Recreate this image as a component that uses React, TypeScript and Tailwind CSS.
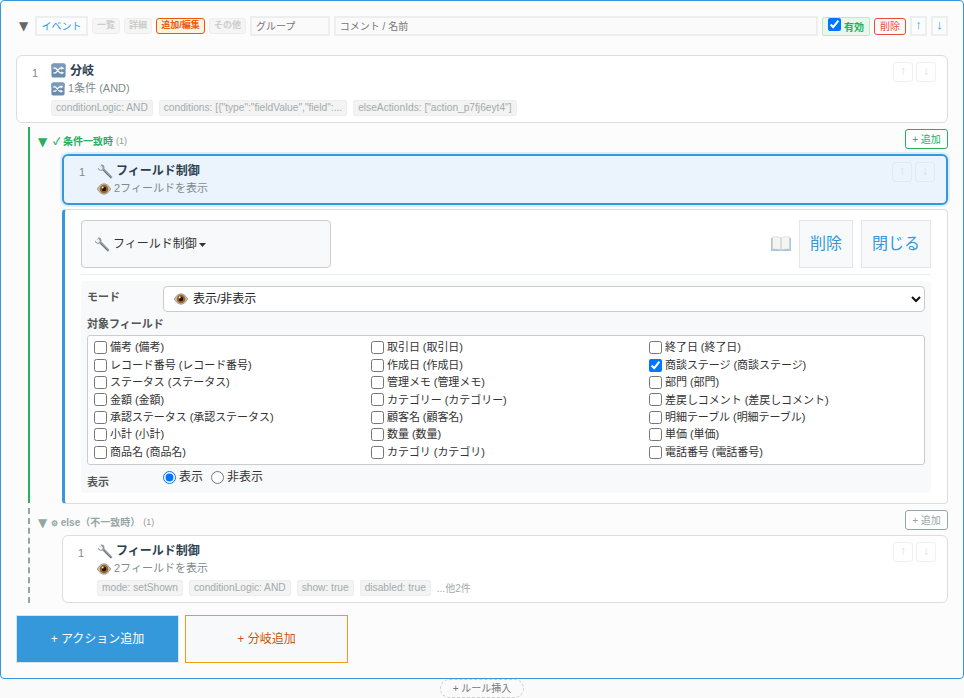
import React from "react";

const Shuffle = ({ s = 15 }: { s?: number }) => (
  <svg width={s} height={s} viewBox="0 0 16 16" className="shrink-0">
    <rect x="0.5" y="0.5" width="15" height="15" rx="2" fill="#6b8cae" />
    <rect x="0.5" y="0.5" width="15" height="7" rx="2" fill="#7c9aba" />
    <path d="M2.500 5.500h2.500l4.500 5h2M2.500 10.500h2.500l4.500-5h2" fill="none" stroke="#fff" strokeWidth="1.300" />
    <path d="M11 3.800l3 1.700-3 1.700zM11 8.800l3 1.700-3 1.700z" fill="#fff" />
  </svg>
);
const Wrench = ({ s = 16 }: { s?: number }) => (
  <svg width={s} height={s} viewBox="0 0 16 16" className="shrink-0">
    <path d="M1 4.500 3.200 6.700l2-.3.500-2L3.500 1.800C5.500.8 7.600 2.200 7.500 4.500c0 .5-.1.800-.2 1.100l7.800 7.800a1.300 1.300 0 0 1-1.800 1.800L5.500 7.400c-2.500 1-5-.6-4.500-2.900z" fill="#929ba3" />
    <path d="M6.500 7.500 13.800 14.800" stroke="#6a747c" strokeWidth="1" />
    <path d="M2.500 2.600 4.500 4.600" stroke="#c2c8cc" strokeWidth=".8" />
  </svg>
);
const Eye = ({ s = 14 }: { s?: number }) => (
  <svg width={s} height={s} viewBox="0 0 14 14" className="shrink-0">
    <path d="M0.300 7C2.300 3.300 4.800 1.800 7 1.800S11.700 3.300 13.700 7C11.700 10.700 9.200 12.200 7 12.200S2.300 10.700.3 7z" fill="#c9c4be" stroke="#85817d" strokeWidth=".7" />
    <circle cx="7" cy="7" r="4.300" fill="#9a6420" />
    <circle cx="7" cy="7" r="2.200" fill="#1d1206" />
    <circle cx="5.700" cy="5.500" r=".9" fill="#fff" />
  </svg>
);
const Book = () => (
  <svg width="20" height="16" viewBox="0 0 20 16" className="shrink-0">
    <path d="M0 2h10v13H0zM10 2h10v13H10z" fill="#a7c7d8" />
    <path d="M1.500 1c3-.6 6-.4 8.300.8V14c-2.300-1-5.300-1.200-8.300-.8zM18.500 1c-3-.6-6-.4-8.300.8V14c2.300-1 5.300-1.200 8.300-.8z" fill="#f4f4f0" stroke="#c8ccd0" strokeWidth=".5" />
  </svg>
);

const Tag = ({ children }: { children: React.ReactNode }) => (
  <span className="rounded-[2px] border border-[#eeeeee] bg-[#f3f3f3] px-[4px] h-[16px] leading-[14px] text-[10.2px] text-[#a3abad] whitespace-nowrap">
    {children}
  </span>
);

const Arrows = ({ box = "border-[#f0f0f0]" }: { box?: string }) => (
  <div className="absolute top-[6px] right-[11px] flex gap-[3px]">
    {["↑", "↓"].map((a) => (
      <span key={a} className={`w-[20px] h-[20px] rounded-[3px] border flex items-center justify-center pb-[3px] text-[12px] text-[#dcdcdc] ${box}`}>
        {a}
      </span>
    ))}
  </div>
);

const F1 = ["備考 (備考)", "レコード番号 (レコード番号)", "ステータス (ステータス)", "金額 (金額)", "承認ステータス (承認ステータス)", "小計 (小計)", "商品名 (商品名)"];
const F2 = ["取引日 (取引日)", "作成日 (作成日)", "管理メモ (管理メモ)", "カテゴリー (カテゴリー)", "顧客名 (顧客名)", "数量 (数量)", "カテゴリ (カテゴリ)"];
const F3 = ["終了日 (終了日)", "商談ステージ (商談ステージ)", "部門 (部門)", "差戻しコメント (差戻しコメント)", "明細テーブル (明細テーブル)", "単価 (単価)", "電話番号 (電話番号)"];

const Col = ({ items, w }: { items: string[]; w: string }) => (
  <div className={`flex flex-col ${w}`}>
    {items.map((t) => (
      <label key={t} className="flex items-center h-[17.4px] text-[11px] tracking-[-0.05px] text-[#333333] whitespace-nowrap">
        <input type="checkbox" readOnly checked={t.startsWith("商談")} className="w-[13px] h-[13px] mr-[3px] ml-0 shrink-0" />
        {t}
      </label>
    ))}
  </div>
);

const Tri = ({ c }: { c: string }) => (
  <span className={`font-['DejaVu_Sans'] text-[12px] leading-none ${c}`}>▼</span>
);

export default function App() {
  return (
    <div className="relative w-[964px] h-[698px] overflow-hidden bg-[#fafafa] font-['Liberation_Sans','Noto_Sans_CJK_JP',sans-serif]">
      <div className="w-[964px] h-[679px] border border-[#3498db] rounded-[4px] bg-[#fcfcfc] pl-[15px] pr-[15px] pt-[15px]">
        {/* header */}
        <div className="flex items-center h-[20px]">
          <span className="w-[19px] pl-[3px] flex"><Tri c="text-[#666666]" /></span>
          <span className="w-[53px] h-[20px] border-2 border-[#eeeeee] bg-[#fafcfe] text-[10px] text-[#3498db] flex items-center justify-center">イベント</span>
          <div className="flex items-center ml-[4px] gap-[4px]">
            <span className="w-[28px] h-[16px] rounded-[3px] border border-[#eeeeee] bg-[#f5f5f5] text-[9px] font-bold text-[#cccccc] flex items-center justify-center">一覧</span>
            <span className="w-[28px] h-[16px] rounded-[3px] border border-[#eeeeee] bg-[#f5f5f5] text-[9px] font-bold text-[#cccccc] flex items-center justify-center">詳細</span>
            <span className="w-[49px] h-[16px] rounded-[3px] border border-[#e8590c] bg-[#fff3e0] text-[9px] font-bold text-[#e8590c] flex items-center justify-center">追加/編集</span>
            <span className="w-[37px] h-[16px] rounded-[3px] border border-[#eeeeee] bg-[#f5f5f5] text-[9px] font-bold text-[#cccccc] flex items-center justify-center">その他</span>
          </div>
          <span className="ml-[4px] w-[80px] h-[20px] border-2 border-[#eeeeee] bg-[#fafafa] text-[10px] text-[#777777] pl-[4px] flex items-center">グループ</span>
          <span className="ml-[4px] w-[485px] h-[20px] border-2 border-[#eeeeee] bg-[#fafafa] text-[10px] text-[#777777] pl-[4px] flex items-center">コメント / 名前</span>
          <span className="relative ml-[4px] w-[48px] h-[19px] rounded-[2px] border border-[#c3e6cb] bg-[#e8f8ec] text-[10px] font-bold text-[#27ae60] flex items-center pl-[21px] pt-[2px]">
            <input type="checkbox" readOnly checked className="absolute left-[5px] top-0 w-[13px] h-[13px] m-0" />
            有効
          </span>
          <span className="ml-[4px] w-[32px] h-[17px] rounded-[3px] border border-[#e74c3c] bg-[#fffafa] text-[10px] text-[#e74c3c] flex items-center justify-center">削除</span>
          <span className="ml-[4px] w-[17px] h-[20px] border-2 border-[#eeeeee] bg-[#fafcfe] text-[13px] text-[#3498db] flex items-center justify-center pb-[2px]">↑</span>
          <span className="ml-[4px] w-[17px] h-[20px] border-2 border-[#eeeeee] bg-[#fafcfe] text-[13px] text-[#3498db] flex items-center justify-center pb-[2px]">↓</span>
        </div>

        {/* branch card */}
        <div className="relative mt-[19px] w-[932px] h-[68px] rounded-[6px] border border-[#dddddd] bg-white flex">
          <span className="w-[34px] pl-[15px] pt-[9px] text-[11px] text-[#888888]">1</span>
          <div className="pt-[6px] flex flex-col">
            <div className="flex items-center gap-[4px] h-[17px] text-[12px] font-bold text-[#2c3e50]"><Shuffle />分岐</div>
            <div className="flex items-center gap-[3px] h-[19px] text-[11px] text-[#7f8c8d]"><Shuffle s={14} />1条件 (AND)</div>
            <div className="flex gap-[6px] mt-[2px]">
              <Tag>conditionLogic: AND</Tag>
              <Tag>conditions: [{'{'}"type":"fieldValue","field":...</Tag>
              <Tag>elseActionIds: ["action_p7fj6eyt4"]</Tag>
            </div>
          </div>
          <Arrows />
        </div>

        {/* match branch */}
        <div className="relative mt-[4px] ml-[12px] w-[920px] h-[376px] pt-[2px] border-l-2 border-[#27ae60]">
          <div className="flex h-[22px] pl-[8px] text-[10px]">
            <span className="flex items-center h-[24px] pt-px">
              <span className="w-[15px] flex"><Tri c="text-[#27ae60]" /></span>
              <span className="font-bold text-[#27ae60]">✓ 条件一致時</span>
              <span className="ml-[3px] text-[9px] font-normal text-[#999999]">(1)</span>
            </span>
            <span className="ml-auto w-[43px] h-[20px] rounded-[3px] border border-[#27ae60] bg-white text-[10px] text-[#27ae60] flex items-center justify-center">+ 追加</span>
          </div>
          {/* selected */}
          <div className="relative ml-[32px] mt-[3px] w-[886px] h-[51px] rounded-[6px] border-2 border-[#3498db] bg-[#ebf3fc] shadow-[0_0_0_2px_rgba(52,152,219,0.15)] flex">
            <span className="w-[33px] pl-[15px] pt-[8px] text-[11px] text-[#888888]">1</span>
            <div className="pt-[6px] flex flex-col">
              <div className="flex items-center gap-[3px] h-[17px] text-[12px] font-bold text-[#2c3e50]"><Wrench />フィールド制御</div>
              <div className="flex items-center gap-[3px] h-[19px] text-[11px] text-[#7f8c8d]"><Eye />2フィールドを表示</div>
            </div>
            <Arrows box="border-[#e2e9f2]" />
          </div>
          {/* editor */}
          <div className="ml-[32px] mt-[4px] w-[886px] h-[295px] rounded-[4px] border border-[#dddddd] border-l-[3px] border-l-[#3498db] bg-white pl-[16px] pr-[16px] pt-[10px]">
            <div className="flex items-center h-[48px]">
              <span className="w-[250px] h-[48px] rounded-[4px] border border-[#cccccc] bg-[#f8f9fa] flex items-center pl-[12px] gap-[3px] text-[12px] text-[#333333]">
                <Wrench />フィールド制御
                <svg width="7" height="4" viewBox="0 0 7 4" className="-ml-[1px] mt-[1px]"><path d="M0 0h7L3.500 4z" fill="#333" /></svg>
              </span>
              <span className="ml-auto"><Book /></span>
              <span className="ml-[8px] w-[54px] h-[48px] border border-[#e5e5e5] bg-[#f8f9fa] text-[16px] text-[#3498db] flex items-center justify-center">削除</span>
              <span className="ml-[8px] w-[70px] h-[48px] border border-[#e5e5e5] bg-[#f8f9fa] text-[16px] text-[#3498db] flex items-center justify-center">閉じる</span>
            </div>
            <div className="mt-[6px] border-t border-[#eeeeee]" />
            <div className="mt-[6px] w-[850px] h-[212px] rounded-[4px] bg-[#f8f9fa] pl-[6px] pr-[6px] pt-[5px]">
              <div className="flex h-[26px]">
                <span className="w-[76px] pt-[3px] text-[11px] font-bold text-[#555555]">モード</span>
                <div className="relative flex-1 h-[26px] rounded-[4px] border border-[#cccccc] bg-white flex items-center pl-[10px] gap-[5px] text-[12px] text-[#222222]">
                  <Eye />表示/非表示
                  <svg className="absolute right-[3px] top-[8px]" width="10" height="8" viewBox="0 0 10 8"><path d="M1 2l4 4 4-4" fill="none" stroke="#111" strokeWidth="2" /></svg>
                </div>
              </div>
              <div className="mt-[4px] h-[16px] leading-[16px] text-[11px] font-bold text-[#555555]">対象フィールド</div>
              <div className="mt-[3px] w-[838px] h-[130px] rounded-[3px] border border-[#cccccc] bg-white pl-[6px] pt-[3px] flex">
                <Col items={F1} w="w-[277px]" />
                <Col items={F2} w="w-[278px]" />
                <Col items={F3} w="w-[270px]" />
              </div>
              <div className="flex h-[26px] mt-[2px]">
                <span className="w-[76px] pt-[7px] text-[11px] font-bold text-[#555555]">表示</span>
                <div className="flex items-center gap-[8px] text-[12px] text-[#333333] pb-[6px]">
                  <label className="flex items-center gap-[3px]"><input type="radio" name="v" readOnly checked className="w-[13px] h-[13px] m-0" />表示</label>
                  <label className="flex items-center gap-[3px]"><input type="radio" name="v" readOnly className="w-[13px] h-[13px] m-0" />非表示</label>
                </div>
              </div>
            </div>
          </div>
        </div>

        {/* else branch */}
        <div className="relative mt-[5px] ml-[12px] w-[920px] h-[95px] pt-[2px] border-l-2 border-dashed border-[#95a5a6]">
          <div className="flex h-[22px] pl-[8px] text-[10px]">
            <span className="flex items-center h-[24px] pt-px">
              <span className="w-[13px] flex"><Tri c="text-[#95a5a6]" /></span>
              <span className="font-bold text-[#95a5a6]"><span className="text-[8px]">⚙</span> else（不一致時）</span>
              <span className="ml-[3px] text-[9px] font-normal text-[#999999]">(1)</span>
            </span>
            <span className="ml-auto w-[43px] h-[20px] rounded-[3px] border border-[#95a5a6] bg-white text-[10px] text-[#95a5a6] flex items-center justify-center">+ 追加</span>
          </div>
          <div className="relative ml-[32px] mt-[3px] w-[886px] h-[68px] rounded-[6px] border border-[#dddddd] bg-white flex">
            <span className="w-[34px] pl-[15px] pt-[9px] text-[11px] text-[#888888]">1</span>
            <div className="pt-[6px] flex flex-col">
              <div className="flex items-center gap-[3px] h-[17px] text-[12px] font-bold text-[#2c3e50]"><Wrench />フィールド制御</div>
              <div className="flex items-center gap-[3px] h-[19px] text-[11px] text-[#7f8c8d]"><Eye />2フィールドを表示</div>
              <div className="flex items-center gap-[6px] mt-[2px]">
                <Tag>mode: setShown</Tag>
                <Tag>conditionLogic: AND</Tag>
                <Tag>show: true</Tag>
                <Tag>disabled: true</Tag>
                <span className="text-[10px] text-[#a3abad]">...他2件</span>
              </div>
            </div>
            <Arrows />
          </div>
        </div>

        {/* add buttons */}
        <div className="mt-[12px] flex gap-[6px]">
          <span className="w-[163px] h-[48px] border border-[#d6e4ec] bg-[#3498db] text-[12px] text-white flex items-center justify-center">+ アクション追加</span>
          <span className="w-[163px] h-[48px] border border-[#f39c12] bg-[#f8f9fa] text-[12px] text-[#d35400] flex items-center justify-center">+ 分岐追加</span>
        </div>
      </div>
      <span className="absolute left-[440px] top-[679px] w-[84px] h-[19px] rounded-[10px] border border-dashed border-[#cccccc] bg-[#fafafa] text-[10px] text-[#777777] flex items-center justify-center">+ ルール挿入</span>
    </div>
  );
}
